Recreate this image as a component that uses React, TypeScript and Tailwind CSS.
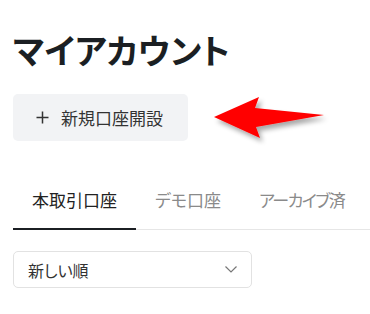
import React from "react";

const font = { fontFamily: '"Noto Sans CJK JP", "Noto Sans", sans-serif' };

const Arrow = () => (
  <svg
    className="absolute left-[204px] top-[88px]"
    width="134"
    height="60"
    viewBox="204 88 134 60"
  >
    <defs>
      <filter id="sh" x="-20%" y="-30%" width="140%" height="160%">
        <feGaussianBlur in="SourceAlpha" stdDeviation="2.5" />
        <feOffset dx="3" dy="4" result="b" />
        <feComponentTransfer>
          <feFuncA type="linear" slope="0.35" />
        </feComponentTransfer>
        <feMerge>
          <feMergeNode />
          <feMergeNode in="SourceGraphic" />
        </feMerge>
      </filter>
    </defs>
    <polygon
      points="214,117 259,97 255,108 324,115 256,127 260,138"
      fill="#ff0000"
      filter="url(#sh)"
    />
  </svg>
);

const tabs = ["本取引口座", "デモ口座", "アーカイブ済"];

const App = () => {
  return (
    <div className="relative min-h-[314px] bg-white pl-[13px] pt-[28px] [font-feature-settings:'palt']" style={font}>
      <h1 className="text-[34px] font-bold leading-[44px] text-[#1b1f23]">
        マイアカウント
      </h1>
      <button className="mt-[22px] flex h-[47px] items-center gap-[12px] rounded-[5px] bg-[#f2f3f5] pl-[23px] pr-[25px] text-[17px] text-[#333]">
        <svg width="13" height="13" viewBox="0 0 13 13">
          <path d="M6.5 0.5v12M0.5 6.5h12" stroke="#333" strokeWidth="1.5" />
        </svg>
        <span>新規口座開設</span>
      </button>
      <div className="mt-[47px] flex border-b border-[#e6e6e6] text-[17px]">
        {tabs.map((t, i) => (
          <div
            key={t}
            className={
              i === 0
                ? "-mb-px shrink-0 whitespace-nowrap border-b-[2px] border-[#1b1f23] px-[19px] pb-[16px] leading-[24px] text-[#222]"
                : i === 1
                  ? "shrink-0 whitespace-nowrap px-[19px] pb-[16px] leading-[24px] text-[#8a8a8a]"
                  : "shrink-0 whitespace-nowrap px-[19px] pb-[16px] leading-[24px] tracking-[-1.5px] text-[#8a8a8a]"
            }
          >
            {t}
          </div>
        ))}
      </div>
      <div className="mt-[21px] flex h-[37px] w-[239px] items-center justify-between rounded-[5px] border border-[#e2e2e2] pl-[14px] pr-[14px] text-[16px] text-[#333]">
        <span>新しい順</span>
        <svg width="12" height="7" viewBox="0 0 12 7">
          <path d="M0.5 0.5l5.5 5.5 5.5-5.5" fill="none" stroke="#777" strokeWidth="1.2" />
        </svg>
      </div>
      <Arrow />
    </div>
  );
};

export default App;
